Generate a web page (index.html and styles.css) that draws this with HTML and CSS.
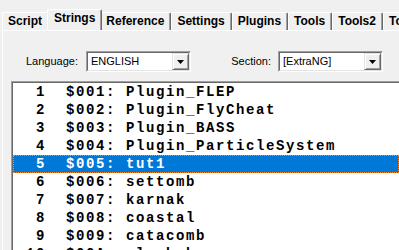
FILE: index.html
```html
<!DOCTYPE html>
<html>
<head>
<meta charset="utf-8">
<link rel="stylesheet" href="styles.css">
</head>
<body>
<div class="tabstrip">
  <div class="tab">Script</div>
  <div class="tab sel">Strings</div>
  <div class="tab">Reference</div>
  <div class="tab">Settings</div>
  <div class="tab">Plugins</div>
  <div class="tab">Tools</div>
  <div class="tab">Tools2</div>
  <div class="tab">Tools3</div>
</div>
<div class="panel">
  <div class="controls">
    <span class="lbl lbl-lang">Language:</span>
    <div class="combo"><div class="combo-inner"><span class="combo-text">ENGLISH</span><span class="combo-btn"><svg width="7" height="4" viewBox="0 0 7 4"><path d="M0 0H7L3.5 4Z" fill="#000"/></svg></span></div></div>
    <span class="lbl lbl-sec">Section:</span>
    <div class="combo"><div class="combo-inner"><span class="combo-text">[ExtraNG]</span><span class="combo-btn"><svg width="7" height="4" viewBox="0 0 7 4"><path d="M0 0H7L3.5 4Z" fill="#000"/></svg></span></div></div>
  </div>
  <div class="list">
    <div class="list-inner">
      <div class="row">  1  $001: Plugin_FLEP</div>
      <div class="row">  2  $002: Plugin_FlyCheat</div>
      <div class="row">  3  $003: Plugin_BASS</div>
      <div class="row">  4  $004: Plugin_ParticleSystem</div>
      <div class="row sel">  5  $005: tut1</div>
      <div class="row">  6  $006: settomb</div>
      <div class="row">  7  $007: karnak</div>
      <div class="row">  8  $008: coastal</div>
      <div class="row">  9  $009: catacomb</div>
      <div class="row"> 10  $00A: alexhub</div>
    </div>
  </div>
</div>
</body>
</html>
```

FILE: styles.css
```css
html, body {
  margin: 0;
  padding: 0;
}
body {
  background: #f0f0f0;
  width: 399px;
  height: 250px;
  overflow: hidden;
  font-family: "Liberation Sans", Arial, sans-serif;
}
.tabstrip {
  display: flex;
  align-items: flex-end;
  height: 30px;
  padding-left: 2px;
  white-space: nowrap;
  overflow: hidden;
}
.tab {
  flex: none;
  height: 18px;
  box-sizing: border-box;
  padding: 0 6px 0 5px;
  border-top: 1px solid #fff;
  border-left: 1px solid #fff;
  border-right: 1px solid #696969;
  border-top-left-radius: 2px;
  border-top-right-radius: 2px;
  box-shadow: inset -1px 0 #a0a0a0;
  font: bold 12px/16px "Liberation Sans", Arial, sans-serif;
  color: #000;
  text-align: center;
  background: #f0f0f0;
}
.tab.sel {
  height: 22px;
  margin: 0 -2px -1px;
  position: relative;
  z-index: 1;
  padding-left: 6px;
  padding-right: 6px;
}
.panel {
  margin-left: 2px;
  border-top: 1px solid #fff;
  border-left: 1px solid #fff;
  height: 230px;
}
.controls {
  display: flex;
  align-items: center;
  margin-top: 20px;
  height: 21px;
  font: 11px/17px "Liberation Sans", Arial, sans-serif;
  color: #000;
}
.lbl {
  flex: none;
  text-align: right;
}
.lbl-lang {
  width: 58px;
  margin-left: 17px;
  margin-right: 8px;
}
.lbl-sec {
  width: 80px;
  margin-right: 7px;
}
.combo {
  flex: none;
  width: 105px;
  height: 21px;
  box-sizing: border-box;
  border: 1px solid;
  border-color: #a0a0a0 #fff #fff #a0a0a0;
}
.combo-inner {
  display: flex;
  height: 19px;
  box-sizing: border-box;
  border: 1px solid;
  border-color: #696969 #e3e3e3 #e3e3e3 #696969;
  background: #fff;
}
.combo-text {
  flex: 1;
  padding-left: 3px;
  line-height: 17px;
}
.combo-btn {
  flex: none;
  width: 17px;
  height: 17px;
  box-sizing: border-box;
  border: 1px solid;
  border-color: #e3e3e3 #696969 #696969 #e3e3e3;
  box-shadow: inset 1px 1px #fff, inset -1px -1px #a0a0a0;
  background: #f0f0f0;
  display: flex;
  align-items: center;
  justify-content: center;
}
.combo-btn svg {
  display: block;
  margin-top: 1px;
}
.list {
  margin: 9px 0 0 8px;
  border-top: 1px solid #a0a0a0;
  border-left: 1px solid #a0a0a0;
  height: 200px;
}
.list-inner {
  border-top: 1px solid #696969;
  border-left: 1px solid #696969;
  background: #fff;
  height: 199px;
}
.row {
  height: 18px;
  box-sizing: border-box;
  padding-left: 3px;
  white-space: pre;
  font: bold 14px/18px "Liberation Mono", "Courier New", monospace;
  letter-spacing: 1.6px;
  color: #000;
}
.row.sel {
  background: #0078d7;
  color: #fff;
  outline: 1px dotted #ff8728;
  outline-offset: -1px;
}
```
